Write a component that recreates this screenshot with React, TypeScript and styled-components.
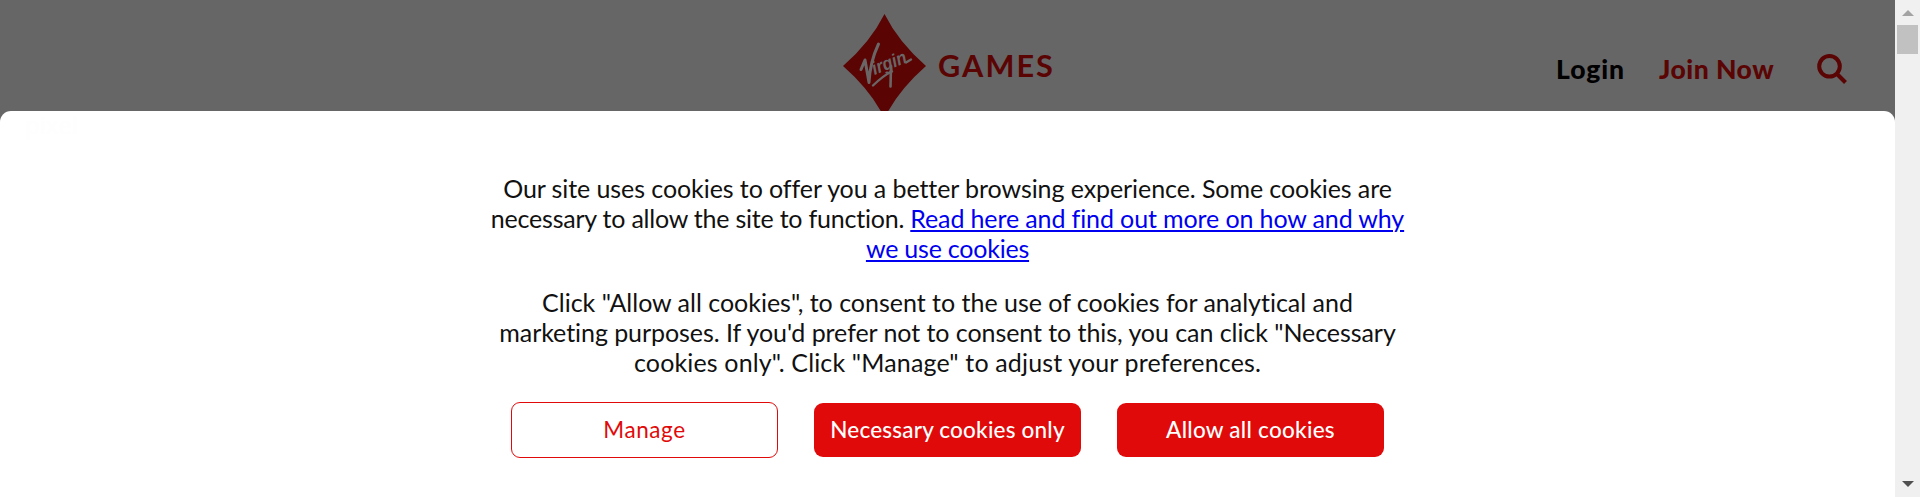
import React from 'react';
import styled, { createGlobalStyle } from 'styled-components';

const GlobalStyle = createGlobalStyle`
  *, *::before, *::after { box-sizing: border-box; }
  body { margin: 0; background: #fff; overflow: hidden; }
`;

const Page = styled.div`
  display: flex;
  width: 1920px;
  height: 497px;
  font-family: Lato, 'Open Sans', sans-serif;
`;

const Main = styled.div`
  flex: 1;
  display: flex;
  flex-direction: column;
  background: #666;
`;

const Header = styled.header`
  height: 111px;
  display: grid;
  grid-template-columns: 843px 1fr auto;
  overflow: hidden;
`;

const Logo = styled.svg`
  grid-column: 2;
  display: block;
`;

const Nav = styled.nav`
  display: flex;
  align-items: flex-start;
  padding: 51px 48px 0 0;
`;

const NavLink = styled.a<{ $color: string; $width: number; $tracking: number }>`
  width: ${(p) => p.$width}px;
  font: 900 26.5px/36px Lato, sans-serif;
  letter-spacing: ${(p) => p.$tracking}px;
  color: ${(p) => p.$color};
  white-space: nowrap;
`;

const SearchIcon = styled.svg`
  display: block;
  margin-top: 2px;
`;

const Panel = styled.section`
  flex: 1;
  display: flex;
  flex-direction: column;
  align-items: center;
  background: #fff;
  border-radius: 11px 11px 0 0;
`;

const Ghost = styled.span`
  align-self: flex-start;
  height: 62px;
  padding: 0 0 0 25px;
  font: 400 24px/28px 'Open Sans', sans-serif;
  color: #fefefe;
`;

const Paragraph = styled.p`
  margin: 0 0 24px;
  font-size: 25px;
  line-height: 30px;
  text-align: center;
  font-variant-ligatures: none;
  color: #111;
`;

const Line = styled.span<{ $tracking: number }>`
  display: block;
  white-space: nowrap;
  letter-spacing: ${(p) => p.$tracking}px;
`;

const CookieLink = styled.a<{ $tracking: number }>`
  color: #0000f0;
  letter-spacing: ${(p) => p.$tracking}px;
  text-decoration: underline;
  text-decoration-thickness: 2px;
  text-underline-offset: 2px;
`;

const Actions = styled.div`
  display: flex;
  align-items: center;
  gap: 36px;
  margin-top: 1px;
  height: 56px;
`;

const Button = styled.button<{ $outline?: boolean; $tracking: number }>`
  width: 267px;
  height: ${(p) => (p.$outline ? 56 : 54)}px;
  padding: 0;
  border: ${(p) => (p.$outline ? '1px solid #e10a0a' : '0')};
  border-radius: 9px;
  background: ${(p) => (p.$outline ? '#fff' : '#e10a0a')};
  color: ${(p) => (p.$outline ? '#e10a0a' : '#fff')};
  font: ${(p) => (p.$outline ? 400 : 500)} 22.5px/28px Lato, sans-serif;
  letter-spacing: ${(p) => p.$tracking}px;
  white-space: nowrap;
`;

const Scrollbar = styled.div`
  width: 25px;
  background: #f0f0f0;
  display: flex;
  flex-direction: column;
  align-items: center;
  padding: 10px 0;
`;

const Thumb = styled.div`
  width: 21px;
  height: 29px;
  margin: 9px 0 auto;
  background: #c1c1c1;
`;

const Arrow = styled.svg`
  display: block;
`;

const RED = '#5a0404';
const SCRIPT = '#6b6666';

function VirginLogo() {
  return (
    <Logo width="230" height="111" viewBox="843 0 230 111" fill="none">
      <path
        d="M884.5 14Q870.5 42 843 66Q870.5 90 884.5 118Q898.5 90 926 66Q898.5 42 884.5 14Z"
        fill={RED}
      />
      <text
        x="0"
        y="0"
        transform="translate(874.5 75) rotate(-21)"
        fill={SCRIPT}
        fontFamily="Liberation Sans, sans-serif"
        fontStyle="italic"
        fontWeight="700"
        fontSize="18.5"
        textLength="36"
        lengthAdjust="spacingAndGlyphs"
      >
        irgin
      </text>
      <g stroke={SCRIPT} strokeLinecap="round" strokeLinejoin="round">
        <path d="M861 69.500L865 60L869 82.500Q870 62 878.500 44" strokeWidth="3" />
        <path d="M873 85.500Q884 75 892 71.500M906 62.500Q908.500 61 911 59.500" strokeWidth="2.400" />
        <path d="M891 66L890.500 86.500" strokeWidth="2.600" />
      </g>
      <text
        x="938"
        y="76.500"
        fill={RED}
        fontFamily="Lato, sans-serif"
        fontWeight="700"
        fontSize="29.500"
        letterSpacing="2"
        textLength="117"
        lengthAdjust="spacingAndGlyphs"
      >
        GAMES
      </text>
    </Logo>
  );
}

export default function App() {
  return (
    <Page>
      <GlobalStyle />
      <Main>
        <Header>
          <VirginLogo />
          <Nav>
            <NavLink $color="#000" $width={103} $tracking={0.9}>Login</NavLink>
            <NavLink $color={RED} $width={158} $tracking={0.5}>Join Now</NavLink>
            <SearchIcon width="30" height="31" viewBox="0 0 30 31" fill="none" stroke={RED} strokeWidth="4">
              <circle cx="12.500" cy="13.300" r="10.300" />
              <path d="M19.500 20.500L28.500 29.500" />
            </SearchIcon>
          </Nav>
        </Header>
        <Panel>
          <Ghost>pixel</Ghost>
          <Paragraph>
            <Line $tracking={-0.08}>
              Our site uses cookies to offer you a better browsing experience. Some cookies are
            </Line>
            <Line $tracking={-0.22}>
              {'necessary to allow the site to function. '}
              <CookieLink $tracking={-0.12}>Read here and find out more on how and why</CookieLink>
            </Line>
            <Line $tracking={-0.2}>
              <CookieLink $tracking={-0.22}>we use cookies</CookieLink>
            </Line>
          </Paragraph>
          <Paragraph>
            <Line $tracking={-0.01}>
              Click "Allow all cookies", to consent to the use of cookies for analytical and
            </Line>
            <Line $tracking={-0.06}>
              marketing purposes. If you'd prefer not to consent to this, you can click "Necessary
            </Line>
            <Line $tracking={0.15}>cookies only". Click "Manage" to adjust your preferences.</Line>
          </Paragraph>
          <Actions>
            <Button $outline $tracking={0.6}>Manage</Button>
            <Button $tracking={0.2}>Necessary cookies only</Button>
            <Button $tracking={0.27}>Allow all cookies</Button>
          </Actions>
        </Panel>
      </Main>
      <Scrollbar>
        <Arrow width="12" height="6" viewBox="0 0 12 6"><path d="M0 6L6 0L12 6Z" fill="#a3a3a3" /></Arrow>
        <Thumb />
        <Arrow width="12" height="6" viewBox="0 0 12 6"><path d="M0 0L6 6L12 0Z" fill="#505050" /></Arrow>
      </Scrollbar>
    </Page>
  );
}
